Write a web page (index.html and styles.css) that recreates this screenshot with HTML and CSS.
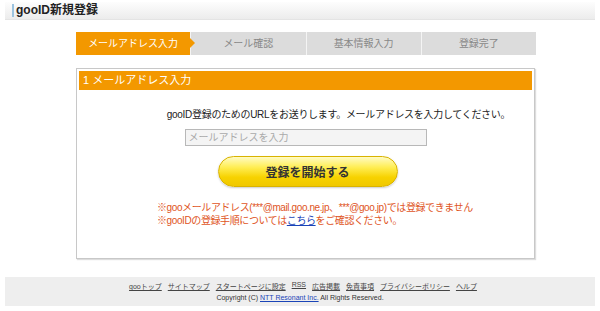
FILE: index.html
```html
<!DOCTYPE html>
<html lang="ja">
<head>
    <meta charset="UTF-8">
    <title>gooID新規登録</title>
    <link rel="stylesheet" href="styles.css">
</head>
<body>

    <header class="page-head">
        <h1 class="page-title">gooID新規登録</h1>
    </header>

    <ol class="steps">
        <li class="step step-current">メールアドレス入力</li>
        <li class="step">メール確認</li>
        <li class="step">基本情報入力</li>
        <li class="step">登録完了</li>
    </ol>

    <section class="panel">
        <h2 class="panel-title">1 メールアドレス入力</h2>

        <p class="lead">gooID登録のためのURLをお送りします。メールアドレスを入力してください。</p>

        <form class="mail-form">
            <input type="text" class="mail-input" placeholder="メールアドレスを入力">
            <button type="submit" class="start-btn">登録を開始する</button>
        </form>

        <ul class="notes">
            <li>※gooメールアドレス(***@mail.goo.ne.jp、***@goo.jp)では登録できません</li>
            <li>※gooIDの登録手順については<a href="#">こちら</a>をご確認ください。</li>
        </ul>
    </section>

    <footer class="footer">
        <nav class="footer-links">
            <a href="#">gooトップ</a>
            <a href="#">サイトマップ</a>
            <a href="#">スタートページに設定</a>
            <a href="#">RSS</a>
            <a href="#">広告掲載</a>
            <a href="#">免責事項</a>
            <a href="#">プライバシーポリシー</a>
            <a href="#">ヘルプ</a>
        </nav>
        <p class="copyright">Copyright (C) <a href="#" class="blue">NTT Resonant Inc.</a> All Rights Reserved.</p>
    </footer>

</body>
</html>
```

FILE: styles.css
```css
* {
    box-sizing: border-box;
}

body {
    margin: 0;
    width: 600px;
    background: #fff;
    font-family: "Liberation Sans", "Noto Sans CJK JP", sans-serif;
    font-size: 10px;
    color: #333;
}

.page-head {
    margin: 2px 5px 0;
    height: 18px;
    background: linear-gradient(#fdfdfd, #ececec);
    border-bottom: 1px solid #e4e4e4;
    display: flex;
    align-items: center;
    padding-left: 7px;
}

.page-title {
    margin: 0;
    font-size: 12px;
    font-weight: bold;
    color: #222;
    border-left: 2px solid #9cc3df;
    padding-left: 2px;
    line-height: 13px;
}

.steps {
    list-style: none;
    margin: 12px 0 0 76px;
    padding: 0;
    width: 460px;
    height: 23px;
    display: flex;
}

.step {
    flex: 1;
    background: #dcdcdc;
    color: #888;
    text-align: center;
    line-height: 23px;
    border-left: 1px solid #f4f4f4;
}

.step-current {
    background: #f39800;
    color: #fff;
    border-left: 0;
    position: relative;
    z-index: 1;
}

.step-current::after {
    content: "";
    position: absolute;
    right: -5px;
    top: 6px;
    border-left: 5px solid #f39800;
    border-top: 5px solid transparent;
    border-bottom: 5px solid transparent;
}

.panel {
    margin: 13px 0 0 76px;
    width: 459px;
    height: 191px;
    border: 1px solid #c8c8c8;
    box-shadow: 1px 1px 1px #ddd;
    padding: 2px;
}

.panel-title {
    margin: 0;
    height: 19px;
    line-height: 19px;
    background: #f39800;
    color: #fff;
    font-size: 11px;
    font-weight: normal;
    padding-left: 4px;
}

.lead {
    margin: 16px 0 0;
    padding-left: 66px;
    text-align: center;
    color: #222;
    letter-spacing: -0.3px;
}

.mail-form {
    display: flex;
    flex-direction: column;
    align-items: center;
    margin-top: 8px;
}

.mail-input {
    width: 242px;
    height: 17px;
    border: 1px solid #b8b8b8;
    background: #f4f4f4;
    font: inherit;
    padding: 0 3px;
}

.mail-input::placeholder {
    color: #aaa;
}

.start-btn {
    margin-top: 10px;
    width: 180px;
    height: 31px;
    border: 1px solid #d9b300;
    border-radius: 16px;
    background: linear-gradient(#fffbc4 0%, #ffee55 35%, #f7d200 70%, #f0c800 100%);
    box-shadow: 0 1px 2px #ccc;
    font-family: "Noto Sans CJK JP", sans-serif;
    font-size: 12px;
    font-weight: bold;
    color: #333;
    margin-left: 4px;
}

.notes {
    list-style: none;
    margin: 14px 0 0 78px;
    padding: 0;
    color: #e0551e;
    line-height: 13px;
    letter-spacing: -0.4px;
}

.notes a {
    color: #1a44b8;
}

.footer {
    margin: 18px 5px 0;
    height: 29px;
    background: #eeeeee;
    text-align: center;
    font-size: 7px;
    padding-top: 4px;
}

.footer-links {
    display: flex;
    justify-content: center;
    gap: 6px;
    margin-left: 6px;
}

.footer a {
    color: #444;
}

.footer .blue {
    color: #1a44b8;
}

.copyright {
    margin: 3px 0 0;
    color: #333;
}
```
